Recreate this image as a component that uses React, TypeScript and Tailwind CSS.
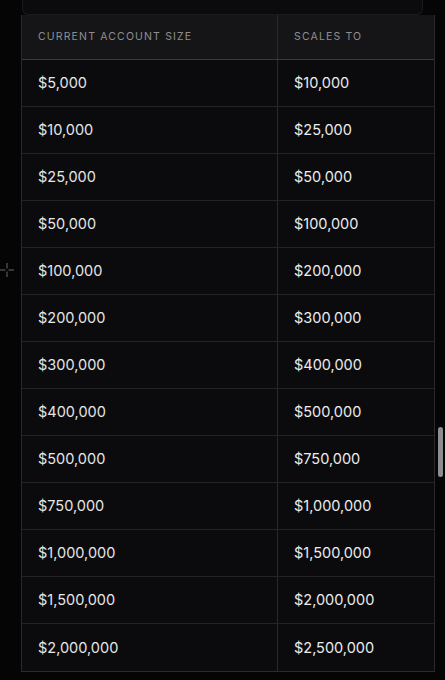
const rows: [string, string][] = [
  ["$5,000", "$10,000"],
  ["$10,000", "$25,000"],
  ["$25,000", "$50,000"],
  ["$50,000", "$100,000"],
  ["$100,000", "$200,000"],
  ["$200,000", "$300,000"],
  ["$300,000", "$400,000"],
  ["$400,000", "$500,000"],
  ["$500,000", "$750,000"],
  ["$750,000", "$1,000,000"],
  ["$1,000,000", "$1,500,000"],
  ["$1,500,000", "$2,000,000"],
  ["$2,000,000", "$2,500,000"],
];

export default function App() {
  return (
    <div
      className="relative h-[680px] w-[445px] overflow-hidden bg-[#050506]"
      style={{ fontFamily: "Inter, 'Liberation Sans', sans-serif" }}
    >
      {/* panel above, mostly scrolled out of view */}
      <div className="ml-[22px] h-[15px] w-[401px] rounded-b-[6px] border-x border-b border-[#1a1a1c] bg-[#0b0b0d]" />

      {/* scaling table */}
      <div className="ml-[21px] w-[414px] border-x border-b border-[#2a2a2d]">
        <div className="grid h-[45px] grid-cols-[256px_1fr] border-b border-[#3a3a3d] bg-[#151517]">
          <div className="flex items-center border-r border-[#2a2a2d] pl-[16px] text-[10.5px] tracking-[0.11em] text-[#8e8e92]">
            CURRENT ACCOUNT SIZE
          </div>
          <div className="flex items-center pl-[16px] text-[10.5px] tracking-[0.11em] text-[#8e8e92]">
            SCALES TO
          </div>
        </div>
        {rows.map(([from, to], i) => (
          <div
            key={from}
            className={`grid h-[47px] grid-cols-[256px_1fr] bg-[#0b0b0d] ${
              i < rows.length - 1 ? "border-b border-[#232326]" : ""
            }`}
          >
            <div className="flex items-center border-r border-[#2a2a2d] pl-[16px] text-[14.5px] text-[#e6e6e6]">
              {from}
            </div>
            <div className="flex items-center pl-[16px] text-[14.5px] text-[#ececec]">
              {to}
            </div>
          </div>
        ))}
      </div>

      {/* crosshair cursor */}
      <svg className="absolute left-0 top-[263px]" width="14" height="14" viewBox="0 0 14 14">
        <path d="M7 0v5.5M7 8.5V14M0 7h5.5M8.5 7H14" stroke="#6a6a6e" strokeWidth="1" />
      </svg>

      {/* scrollbar thumb */}
      <div className="absolute left-[438px] top-[427px] h-[50px] w-[5px] rounded-full bg-[#8e8e92]" />
    </div>
  );
}
